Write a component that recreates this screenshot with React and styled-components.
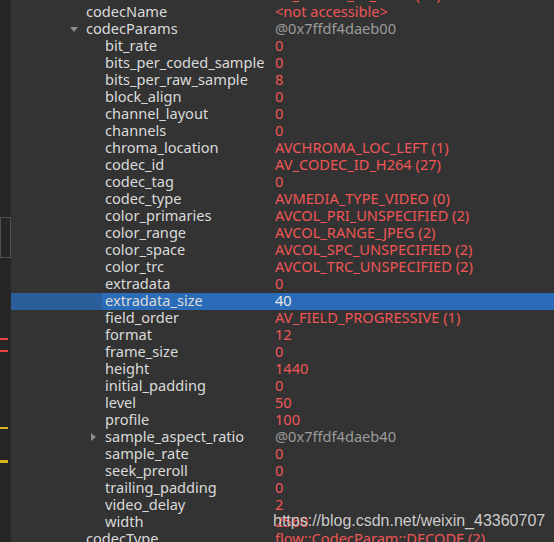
import React from "react";
import styled, { createGlobalStyle } from "styled-components";

const GlobalStyle = createGlobalStyle`
  html, body {
    margin: 0;
    padding: 0;
    background: #333333;
    overflow: hidden;
  }
  #root {
    height: 542px;
  }
`;

const rows = [
  { name: "codecId", value: "AV_CODEC_ID_H264 (27)", level: 0 },
  { name: "codecName", value: "<not accessible>", level: 0 },
  { name: "codecParams", value: "@0x7ffdf4daeb00", level: 0, kind: "addr", arrow: "open" },
  { name: "bit_rate", value: "0", level: 1 },
  { name: "bits_per_coded_sample", value: "0", level: 1 },
  { name: "bits_per_raw_sample", value: "8", level: 1 },
  { name: "block_align", value: "0", level: 1 },
  { name: "channel_layout", value: "0", level: 1 },
  { name: "channels", value: "0", level: 1 },
  { name: "chroma_location", value: "AVCHROMA_LOC_LEFT (1)", level: 1 },
  { name: "codec_id", value: "AV_CODEC_ID_H264 (27)", level: 1 },
  { name: "codec_tag", value: "0", level: 1 },
  { name: "codec_type", value: "AVMEDIA_TYPE_VIDEO (0)", level: 1 },
  { name: "color_primaries", value: "AVCOL_PRI_UNSPECIFIED (2)", level: 1 },
  { name: "color_range", value: "AVCOL_RANGE_JPEG (2)", level: 1 },
  { name: "color_space", value: "AVCOL_SPC_UNSPECIFIED (2)", level: 1 },
  { name: "color_trc", value: "AVCOL_TRC_UNSPECIFIED (2)", level: 1 },
  { name: "extradata", value: "0", level: 1 },
  { name: "extradata_size", value: "40", level: 1, selected: true },
  { name: "field_order", value: "AV_FIELD_PROGRESSIVE (1)", level: 1 },
  { name: "format", value: "12", level: 1 },
  { name: "frame_size", value: "0", level: 1 },
  { name: "height", value: "1440", level: 1 },
  { name: "initial_padding", value: "0", level: 1 },
  { name: "level", value: "50", level: 1 },
  { name: "profile", value: "100", level: 1 },
  { name: "sample_aspect_ratio", value: "@0x7ffdf4daeb40", level: 1, kind: "addr", arrow: "closed" },
  { name: "sample_rate", value: "0", level: 1 },
  { name: "seek_preroll", value: "0", level: 1 },
  { name: "trailing_padding", value: "0", level: 1 },
  { name: "video_delay", value: "2", level: 1 },
  { name: "width", value: "2560", level: 1 },
  { name: "codecType", value: "flow::CodecParam::DECODE (2)", level: 0 },
];

const marks = [
  { top: 338, height: 2, color: "#e94343" },
  { top: 350, height: 2, color: "#e94343" },
  { top: 427, height: 2, color: "#d9b21f" },
  { top: 460, height: 3, color: "#d9b21f" },
];

const branchWidth = level => (level === 0 ? 72 : 91);

const Arrow = ({ open }) =>
  open ? (
    <svg width="8" height="5" viewBox="0 0 8 5">
      <path d="M0 0 L8 0 L4 5 Z" fill="#8c8c8c" />
    </svg>
  ) : (
    <svg width="5" height="8" viewBox="0 0 5 8">
      <path d="M0 0 L5 4 L0 8 Z" fill="#8c8c8c" />
    </svg>
  );

const App = () => (
  <>
    <GlobalStyle />
    <Window>
      <Gutter>
        <GutterFrame />
        {marks.map((m, i) => (
          <GutterMark key={i} top={m.top} height={m.height} color={m.color} />
        ))}
      </Gutter>
      <Tree>
        <RowList>
          {rows.map(row => (
            <Row key={row.name + row.level}>
              <Branch width={branchWidth(row.level)} selected={row.selected}>
                {row.arrow && (
                  <ArrowBox>
                    <Arrow open={row.arrow === "open"} />
                  </ArrowBox>
                )}
              </Branch>
              <NameCell width={264 - branchWidth(row.level)} selected={row.selected}>
                <Label>{row.name}</Label>
              </NameCell>
              <ValueCell kind={row.kind} selected={row.selected}>
                <Label>{row.value}</Label>
              </ValueCell>
            </Row>
          ))}
        </RowList>
        <Watermark>https://blog.csdn.net/weixin_43360707</Watermark>
      </Tree>
    </Window>
  </>
);

export default App;

//-----//

const Window = styled.div`
  display: flex;
  width: 554px;
  height: 542px;
  overflow: hidden;
  background: #333333;
  font: 14.6px "Noto Sans", "Open Sans", sans-serif;
`;

const Gutter = styled.div`
  position: relative;
  flex: 0 0 11px;
  background: #262626;
`;

const GutterFrame = styled.div`
  position: absolute;
  top: 217px;
  left: 0;
  width: 9px;
  height: 39px;
  border: 1px solid #4e4e4e;
`;

const GutterMark = styled.div`
  position: absolute;
  left: 0;
  top: ${props => props.top}px;
  width: 8px;
  height: ${props => props.height}px;
  background: ${props => props.color};
`;

const Tree = styled.div`
  position: relative;
  flex: 1;
  overflow: hidden;
`;

const RowList = styled.div`
  display: flex;
  flex-direction: column;
  margin-top: -13.5px;
`;

const Row = styled.div`
  display: flex;
  height: 17px;
  align-items: center;
  white-space: nowrap;
`;

const Label = styled.span`
  position: relative;
  top: -1px;
  line-height: 17px;
`;

const Branch = styled.div`
  flex: 0 0 ${props => props.width}px;
  height: 100%;
  display: flex;
  justify-content: flex-end;
  background: ${props => (props.selected ? "#2b5f9b" : "transparent")};
`;

const ArrowBox = styled.div`
  width: 18px;
  height: 100%;
  display: flex;
  align-items: center;
  justify-content: center;
`;

const NameCell = styled.div`
  flex: 0 0 ${props => props.width}px;
  box-sizing: border-box;
  height: 100%;
  display: flex;
  align-items: center;
  padding-left: 3px;
  color: #dadada;
  background: ${props => (props.selected ? "#2a6cb7" : "transparent")};
`;

const ValueCell = styled.div`
  flex: 1;
  height: 100%;
  display: flex;
  align-items: center;
  color: ${props =>
    props.selected ? "#e8e8e8" : props.kind === "addr" ? "#9b9b9b" : "#ef5656"};
  background: ${props => (props.selected ? "#2a6cb7" : "transparent")};
`;

const Watermark = styled.div`
  position: absolute;
  left: 262px;
  top: 512px;
  font: 16px "Liberation Sans", Arial, sans-serif;
  color: rgba(220, 220, 220, 0.92);
  white-space: nowrap;
`;
